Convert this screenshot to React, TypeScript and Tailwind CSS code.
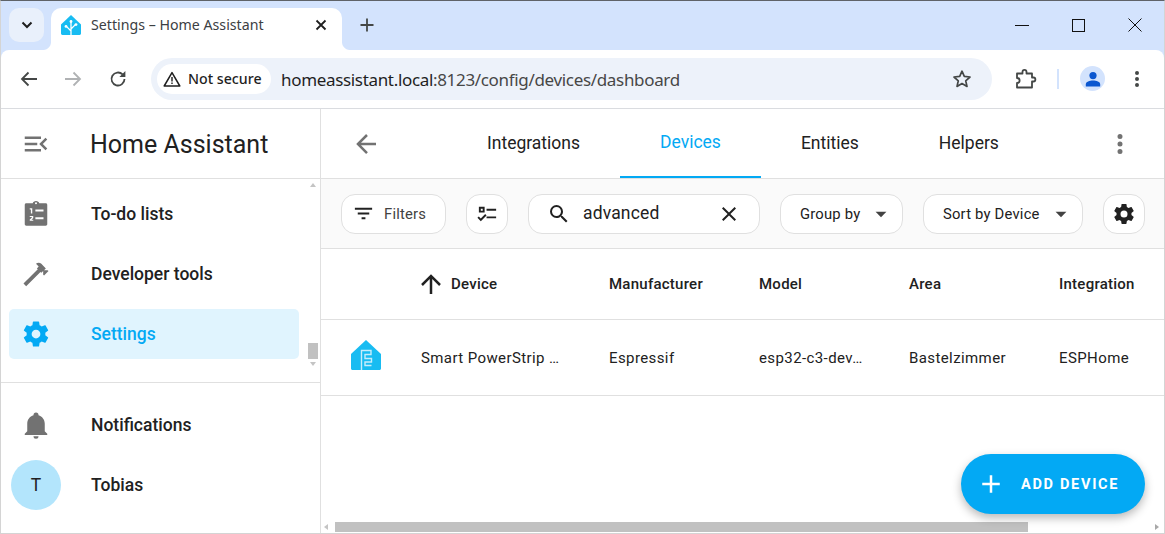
import React from "react";

const P = {
  menuOpen: "M21,15.61L19.59,17L14.58,12L19.59,7L21,8.39L17.44,12L21,15.61M3,6H16V8H3V6M3,13V11H13V13H3M3,18V16H16V18H3Z",
  hammer: "M2 19.63L13.43 8.2L12.72 7.5L14.14 6.07L12 3.89C13.2 2.7 15.09 2.7 16.27 3.89L19.87 7.5L18.45 8.91H21.29L22 9.62L18.45 13.21L17.74 12.5V9.62L16.27 11.04L15.56 10.33L4.13 21.76L2 19.63Z",
  cog: "M12,15.5A3.5,3.5 0 0,1 8.5,12A3.5,3.5 0 0,1 12,8.5A3.5,3.5 0 0,1 15.5,12A3.5,3.5 0 0,1 12,15.5M19.43,12.97C19.47,12.65 19.5,12.33 19.5,12C19.5,11.67 19.47,11.34 19.43,11L21.54,9.37C21.73,9.22 21.78,8.95 21.66,8.73L19.66,5.27C19.54,5.05 19.27,4.96 19.05,5.05L16.56,6.05C16.04,5.66 15.5,5.32 14.87,5.07L14.5,2.42C14.46,2.18 14.25,2 14,2H10C9.75,2 9.54,2.18 9.5,2.42L9.13,5.07C8.5,5.32 7.96,5.66 7.44,6.05L4.95,5.05C4.73,4.96 4.46,5.05 4.34,5.27L2.34,8.73C2.21,8.95 2.27,9.22 2.46,9.37L4.57,11C4.53,11.34 4.5,11.67 4.5,12C4.5,12.33 4.53,12.65 4.57,12.97L2.46,14.63C2.27,14.78 2.21,15.05 2.34,15.27L4.34,18.73C4.46,18.95 4.73,19.03 4.95,18.95L7.44,17.94C7.96,18.34 8.5,18.68 9.13,18.93L9.5,21.58C9.54,21.82 9.75,22 10,22H14C14.25,22 14.46,21.82 14.5,21.58L14.87,18.93C15.5,18.67 16.04,18.34 16.56,17.94L19.05,18.95C19.27,19.03 19.54,18.95 19.66,18.73L21.66,15.27C21.78,15.05 21.73,14.78 21.54,14.63L19.43,12.97Z",
  bell: "M21,19V20H3V19L5,17V11C5,7.9 7.03,5.17 10,4.29C10,4.19 10,4.1 10,4A2,2 0 0,1 12,2A2,2 0 0,1 14,4C14,4.1 14,4.19 14,4.29C16.97,5.17 19,7.9 19,11V17L21,19M14,21A2,2 0 0,1 12,23A2,2 0 0,1 10,21",
  arrowLeft: "M20,11V13H8L13.5,18.5L12.08,19.92L4.16,12L12.08,4.08L13.5,5.5L8,11H20Z",
  dots: "M12,16A2,2 0 0,1 14,18A2,2 0 0,1 12,20A2,2 0 0,1 10,18A2,2 0 0,1 12,16M12,10A2,2 0 0,1 14,12A2,2 0 0,1 12,14A2,2 0 0,1 10,12A2,2 0 0,1 12,10M12,4A2,2 0 0,1 14,6A2,2 0 0,1 12,8A2,2 0 0,1 10,6A2,2 0 0,1 12,4Z",
  filter: "M6,13H18V11H6M3,6V8H21V6M10,18H14V16H10V18Z",
  checks: "M3,5H9V11H3V5M5,7V9H7V7H5M11,7H21V9H11V7M11,15H21V17H11V15M5,20L1.5,16.5L2.91,15.09L5,17.17L9.59,12.59L11,14L5,20Z",
  magnify: "M9.5,3A6.5,6.5 0 0,1 16,9.5C16,11.11 15.41,12.59 14.44,13.73L14.71,14H15.5L20.5,19L19,20.5L14,15.5V14.71L13.73,14.44C12.59,15.41 11.11,16 9.5,16A6.5,6.5 0 0,1 3,9.5A6.5,6.5 0 0,1 9.5,3M9.5,5C7,5 5,7 5,9.5C5,12 7,14 9.5,14C12,14 14,12 14,9.5C14,7 12,5 9.5,5Z",
  close: "M19,6.41L17.59,5L12,10.59L6.41,5L5,6.41L10.59,12L5,17.59L6.41,19L12,13.41L17.59,19L19,17.59L13.41,12L19,6.41Z",
  menuDown: "M7,10L12,15L17,10H7Z",
  arrowUp: "M13,20H11V8L5.5,13.5L4.08,12.08L12,4.16L19.92,12.08L18.5,13.5L13,8V20Z",
  plus: "M19,13H13V19H11V13H5V11H11V5H13V11H19V13Z",
};

function I({ d, size = 30, className = "" }: { d: string; size?: number; className?: string }) {
  return (
    <svg width={size} height={size} viewBox="0 0 24 24" className={"shrink-0 fill-current " + className}>
      <path d={d} />
    </svg>
  );
}

function Clipboard({ className = "" }: { className?: string }) {
  return (
    <svg width={30} height={30} viewBox="0 0 24 24" className={"shrink-0 " + className}>
      <path
        fill="currentColor"
        fillRule="evenodd"
        d="M4.2 3.4H9.4C9.6 2.4 10.7 1.6 12 1.6S14.4 2.4 14.6 3.4H19.8C20.5 3.4 21 3.9 21 4.6V20.2C21 20.8 20.5 21.4 19.8 21.4H4.2C3.5 21.4 3 20.8 3 20.2V4.6C3 3.9 3.5 3.4 4.2 3.4ZM12 2.6A.8.8 0 1 0 12 4.2A.8.8 0 1 0 12 2.6ZM11.5 8.4V10H18V8.4ZM11.5 14.6V16.2H18V14.6ZM7 7.4V8.3H7.9V11.6H9V7.4ZM7 13.6V14.4H8.6V15L7 16.4V17.4H9.8V16.5H8.4L9.8 15.2V13.6Z"
      />
    </svg>
  );
}

function HaLogo({ size = 20 }: { size?: number }) {
  return (
    <svg width={size} height={size} viewBox="0 0 20 20" className="shrink-0">
      <path fill="#18bcf2" d="M10 0 L20 9.4 V18.6 C20 19.4 19.4 20 18.6 20 H1.4 C.6 20 0 19.4 0 18.6 V9.4 Z" />
      <path stroke="#fff" strokeWidth="1.3" fill="none" d="M10 20 V6.5 M10 16 L5.4 11.4 M10 14 L14.6 9.4" />
      <circle cx="10" cy="6.5" r="1.4" fill="#fff" />
      <circle cx="15" cy="9.6" r="1.4" fill="#fff" />
      <circle cx="5" cy="11.4" r="1.4" fill="#fff" />
    </svg>
  );
}

function EspLogo() {
  return (
    <svg width={30} height={30} viewBox="0 0 30 30" className="mb-[5px] shrink-0">
      <path fill="#18bcf2" d="M15 0 L30 14 V28.5 C30 29.3 29.3 30 28.5 30 H1.5 C.7 30 0 29.3 0 28.5 V14 L15 0 Z" />
      <path
        stroke="#c8edfb"
        strokeWidth="1.4"
        fill="none"
        d="M10.5 30 V10.5 H20 V14.5 H14 V18.5 H20.5 V22 H14 V25.5 H20.5"
      />
    </svg>
  );
}

function NavRow({ icon, label, active }: { icon: React.ReactNode; label: string; active?: boolean }) {
  return (
    <div
      className={
        "ml-2 flex h-[50px] w-[290px] items-center rounded-[5px] pl-3 " +
        (active ? "bg-[#e0f4fe] text-[#03a9f4]" : "text-[#212121]")
      }
    >
      <span className={"flex w-[70px] shrink-0 " + (active ? "text-[#03a9f4]" : "text-[#727272]")}>{icon}</span>
      <span className="text-[17.5px] font-medium">{label}</span>
    </div>
  );
}

function Chip({ children, className = "" }: { children: React.ReactNode; className?: string }) {
  return (
    <div className={"flex h-10 items-center rounded-[14px] border border-[#e0e0e0] bg-white text-[#212121] " + className}>
      {children}
    </div>
  );
}

function Th({ children, className = "" }: { children: React.ReactNode; className?: string }) {
  return <div className={"w-[150px] shrink-0 text-[15px] font-medium tracking-[0.25px] " + className}>{children}</div>;
}

export default function App() {
  return (
    <div
      className="relative flex h-[534px] w-[1165px] flex-col overflow-hidden border-x border-t border-b border-x-[#d4d4d4] border-b-[#d4d4d4] border-t-[#5f6368] bg-[#d3e3fd] font-['Roboto',sans-serif]"
    >
      {/* Tab strip */}
      <div className="flex h-[49px] shrink-0 items-end font-['Noto_Sans',sans-serif] text-[#1f1f1f]">
        <div className="mb-2 ml-2 flex h-[34px] w-[35px] items-center justify-center self-end rounded-[10px] bg-[#e9f0fb]">
          <svg width="12" height="8" viewBox="0 0 12 8" className="text-[#1f1f1f]">
            <path d="M1.5 1.5 L6 6 L10.5 1.5" fill="none" stroke="currentColor" strokeWidth="2" />
          </svg>
        </div>
        <div className="relative ml-[7px] flex h-[42px] w-[291px] items-center rounded-t-[10px] bg-white pb-2 pl-[10px]">
          <span className="absolute bottom-0 left-[-8px] h-2 w-2 bg-[radial-gradient(circle_at_0_0,#d3e3fd_7.5px,#ffffff_8.5px)]" />
          <span className="absolute bottom-0 right-[-8px] h-2 w-2 bg-[radial-gradient(circle_at_100%_0,#d3e3fd_7.5px,#ffffff_8.5px)]" />
          <HaLogo />
          <span className="ml-[10px] text-[14.2px] whitespace-nowrap text-[#3c4043]">Settings – Home Assistant</span>
          <svg width="12" height="12" viewBox="0 0 12 12" className="ml-auto mr-[15px]">
            <path d="M1.5 1.5 L10.5 10.5 M10.5 1.5 L1.5 10.5" stroke="#1f1f1f" strokeWidth="1.8" />
          </svg>
        </div>
        <svg width="14" height="14" viewBox="0 0 14 14" className="mb-[18px] ml-[18px]">
          <path d="M7 .5 V13.5 M.5 7 H13.5" stroke="#444746" strokeWidth="1.8" />
        </svg>
        <div className="mb-[18px] ml-auto flex items-center pr-[22px]">
          <div className="h-px w-[14px] bg-[#111]" />
          <div className="ml-[43px] h-[13px] w-[13px] border border-[#111]" />
          <svg width="14" height="14" viewBox="0 0 14 14" className="ml-[43px]">
            <path d="M.5 .5 L13.5 13.5 M13.5 .5 L.5 13.5" stroke="#111" strokeWidth="1" />
          </svg>
        </div>
      </div>

      {/* Toolbar */}
      <div className="flex h-[59px] shrink-0 items-center rounded-t-[8px] border-b border-[#dadce0] bg-white pb-px">
        <svg width="18" height="16" viewBox="0 0 18 16" className="ml-[19px] text-[#444746]">
          <path d="M17 8 H2 M8.5 1.5 L2 8 L8.5 14.5" fill="none" stroke="currentColor" strokeWidth="1.8" />
        </svg>
        <svg width="18" height="16" viewBox="0 0 18 16" className="ml-[26px] text-[#b0b2b4]">
          <path d="M1 8 H16 M9.5 1.5 L16 8 L9.5 14.5" fill="none" stroke="currentColor" strokeWidth="1.8" />
        </svg>
        <svg width="18" height="18" viewBox="0 0 18 18" className="ml-[27px] text-[#444746]">
          <path d="M15.5 9 A6.5 6.5 0 1 1 13.6 4.4" fill="none" stroke="currentColor" strokeWidth="1.8" />
          <path d="M16.4 1 V7 H10.4 Z" fill="currentColor" />
        </svg>
        <div className="ml-[24px] flex h-[42px] w-[841px] items-center rounded-full bg-[#edf2fa] pl-[6px]">
          <div className="flex h-[30px] w-[114px] items-center rounded-full bg-white pl-[6px] font-['Noto_Sans',sans-serif]">
            <svg width="18" height="16" viewBox="0 0 18 16" className="shrink-0">
              <path d="M9 1.6 L16.8 15 H1.2 Z" fill="none" stroke="#1f1f1f" strokeWidth="1.5" strokeLinejoin="round" />
              <path d="M9 6 V10.6 M9 11.6 V13" stroke="#1f1f1f" strokeWidth="1.4" />
            </svg>
            <span className="ml-[7px] text-[14.2px] font-medium whitespace-nowrap text-[#1f1f1f]">Not secure</span>
          </div>
          <span className="ml-[10px] pt-[3px] font-['Noto_Sans',sans-serif] text-[17px] tracking-[-0.33px] whitespace-nowrap text-[#1f1f1f]">
            homeassistant.local<span className="text-[#474747]">:8123/config/devices/dashboard</span>
          </span>
          <svg width="20" height="20" viewBox="0 0 20 20" className="ml-auto mr-5 shrink-0">
            <path
              d="M10 2.2 L12.3 7.4 L18 8 L13.7 11.8 L15 17.4 L10 14.5 L5 17.4 L6.3 11.8 L2 8 L7.7 7.4 Z"
              fill="none"
              stroke="#444746"
              strokeWidth="1.7"
              strokeLinejoin="round"
            />
          </svg>
        </div>
        <svg width="22" height="22" viewBox="0 0 22 22" className="ml-[23px]">
          <path
            d="M2 5.5 H7.5 V4 C7.5 1.2 11.5 1.2 11.5 4 V5.5 H17 V9.5 H18.5 C21 9.5 21 13.5 18.5 13.5 H17 V19.5 H2 V15 C5.5 15 5.5 10 2 10 Z"
            fill="none"
            stroke="#444746"
            strokeWidth="1.8"
            strokeLinejoin="round"
          />
        </svg>
        <div className="ml-[20px] h-[20px] w-[2px] bg-[#d3e3fd]" />
        <div className="ml-[21px] flex h-[25px] w-[25px] items-center justify-center rounded-full bg-[#d3e3fd]">
          <svg width="16" height="16" viewBox="0 0 16 16">
            <circle cx="8" cy="4.6" r="3.6" fill="#0b57d0" />
            <path d="M.8 15.6 V13.4 C.8 10.8 4.6 9.6 8 9.6 S15.2 10.8 15.2 13.4 V15.6 Z" fill="#0b57d0" />
          </svg>
        </div>
        <I d={P.dots} size={24} className="ml-[20px] text-[#444746]" />
      </div>

      {/* Page */}
      <div className="relative flex min-h-0 flex-1 bg-white">
        {/* Sidebar */}
        <div className="flex w-[320px] shrink-0 flex-col border-r border-[#e0e0e0]">
          <div className="flex h-[70px] shrink-0 items-center border-b border-[#e0e0e0] pl-5 text-[#212121]">
            <I d={P.menuOpen} className="text-[#727272]" />
            <span className="ml-[39px] pt-px text-[25px] leading-none">Home Assistant</span>
          </div>
          <div className="relative flex h-[204px] shrink-0 flex-col gap-[10px] border-b border-[#e0e0e0] pt-[10px]">
            <NavRow icon={<Clipboard />} label="To-do lists" />
            <NavRow icon={<I d={P.hammer} />} label="Developer tools" />
            <NavRow active icon={<I d={P.cog} />} label="Settings" />
            <div className="absolute top-0 right-[2px] flex h-[191px] w-[10px] flex-col items-center justify-between py-[4px]">
              <span className="h-0 w-0 border-x-[3.5px] border-b-[4px] border-x-transparent border-b-[#c4c4c4]" />
              <div className="flex flex-col items-center gap-[3px]">
                <div className="h-4 w-[10px] bg-[#c1c1c1]" />
                <span className="h-0 w-0 border-x-[3.5px] border-t-[4px] border-x-transparent border-t-[#c4c4c4]" />
              </div>
            </div>
          </div>
          <div className="flex flex-col gap-[10px] pt-[17px]">
            <NavRow icon={<I d={P.bell} />} label="Notifications" />
            <div className="ml-[10px] flex h-[50px] items-center text-[#212121]">
              <div className="flex h-[50px] w-[50px] items-center justify-center rounded-full bg-[#b3e5fc] text-[17.5px]">T</div>
              <span className="ml-[30px] text-[17.5px] font-medium">Tobias</span>
            </div>
          </div>
        </div>

        {/* Main */}
        <div className="flex min-w-0 flex-1 flex-col text-[#212121]">
          <div className="flex h-[70px] shrink-0 items-center border-b border-[#e0e0e0]">
            <I d={P.arrowLeft} className="ml-[30px] text-[#727272]" />
            <div className="ml-[66px] flex h-full items-stretch text-[17.5px]">
              <div className="flex items-center px-10">Integrations</div>
              <div className="relative flex items-center border-b-2 border-[#03a9f4] px-10 text-[#03a9f4]">Devices</div>
              <div className="flex items-center px-10">Entities</div>
              <div className="flex items-center px-10">Helpers</div>
            </div>
            <I d={P.dots} className="ml-auto mr-[29px] text-[#727272]" />
          </div>

          <div className="flex h-[70px] shrink-0 items-center border-b border-[#e0e0e0] bg-[#fafafa] pl-5">
            <Chip className="w-[105px] pl-[10px]">
              <I d={P.filter} size={23} />
              <span className="ml-[9px] pt-px text-[14.8px] tracking-[0.2px] text-[#424242]">Filters</span>
            </Chip>
            <Chip className="ml-5 w-[42px] justify-center">
              <I d={P.checks} size={23} />
            </Chip>
            <Chip className="ml-5 w-[232px] pl-[18px]">
              <I d={P.magnify} size={24} />
              <span className="ml-[12px] text-[17.5px] tracking-[0.15px]">advanced</span>
              <I d={P.close} size={24} className="ml-auto mr-[18px]" />
            </Chip>
            <Chip className="ml-5 w-[123px] pl-[19px]">
              <span className="pt-px text-[14.8px] tracking-[0.2px]">Group by</span>
              <I d={P.menuDown} size={26} className="ml-2 text-[#424242]" />
            </Chip>
            <Chip className="ml-5 w-[160px] pl-[19px]">
              <span className="pt-px text-[14.8px] tracking-[0.2px] whitespace-nowrap">Sort by Device</span>
              <I d={P.menuDown} size={26} className="ml-[8px] text-[#424242]" />
            </Chip>
            <Chip className="ml-5 w-[42px] justify-center">
              <I d={P.cog} size={24} />
            </Chip>
          </div>

          <div className="flex h-[71px] shrink-0 items-center border-b border-[#e0e0e0] pl-[100px]">
            <div className="flex w-[188px] shrink-0 items-center text-[15px] font-medium tracking-[0.25px]">
              <I d={P.arrowUp} className="-ml-[5px]" />
              <span className="ml-[5px]">Device</span>
            </div>
            <Th>Manufacturer</Th>
            <Th>Model</Th>
            <Th>Area</Th>
            <Th>Integration</Th>
          </div>

          <div className="flex h-[76px] shrink-0 items-center border-b border-[#e0e0e0] pl-[30px] text-[15px] tracking-[0.4px]">
            <EspLogo />
            <div className="ml-10 w-[139px] shrink-0 whitespace-nowrap pt-[2px]">Smart PowerStrip …</div>
            <div className="ml-[49px] w-[150px] shrink-0 pt-[2px]">Espressif</div>
            <div className="w-[150px] shrink-0 whitespace-nowrap pt-[2px]">esp32-c3-dev…</div>
            <div className="w-[150px] shrink-0 pt-[2px]">Bastelzimmer</div>
            <div className="w-[100px] shrink-0 pt-[2px]">ESPHome</div>
          </div>

          <div className="mt-auto flex h-[13px] shrink-0 items-center px-[3px]">
            <span className="h-0 w-0 border-y-[3.5px] border-r-[4px] border-y-transparent border-r-[#c4c4c4]" />
            <div className="ml-[7px] h-[10px] w-[693px] bg-[#c1c1c1]" />
            <span className="ml-auto mr-[2px] h-0 w-0 border-y-[3.5px] border-l-[4px] border-y-transparent border-l-[#a8a8a8]" />
          </div>
        </div>

        {/* FAB */}
        <div className="absolute right-[19px] bottom-[19px] flex h-[60px] w-[184px] items-center rounded-[30px] bg-[#03a9f4] pl-[15px] text-white shadow-[0_4px_10px_rgba(0,0,0,0.28)]">
          <I d={P.plus} />
          <span className="ml-[15px] pt-[2px] text-[14.5px] font-bold tracking-[1.7px] whitespace-nowrap">ADD DEVICE</span>
        </div>
      </div>
    </div>
  );
}
